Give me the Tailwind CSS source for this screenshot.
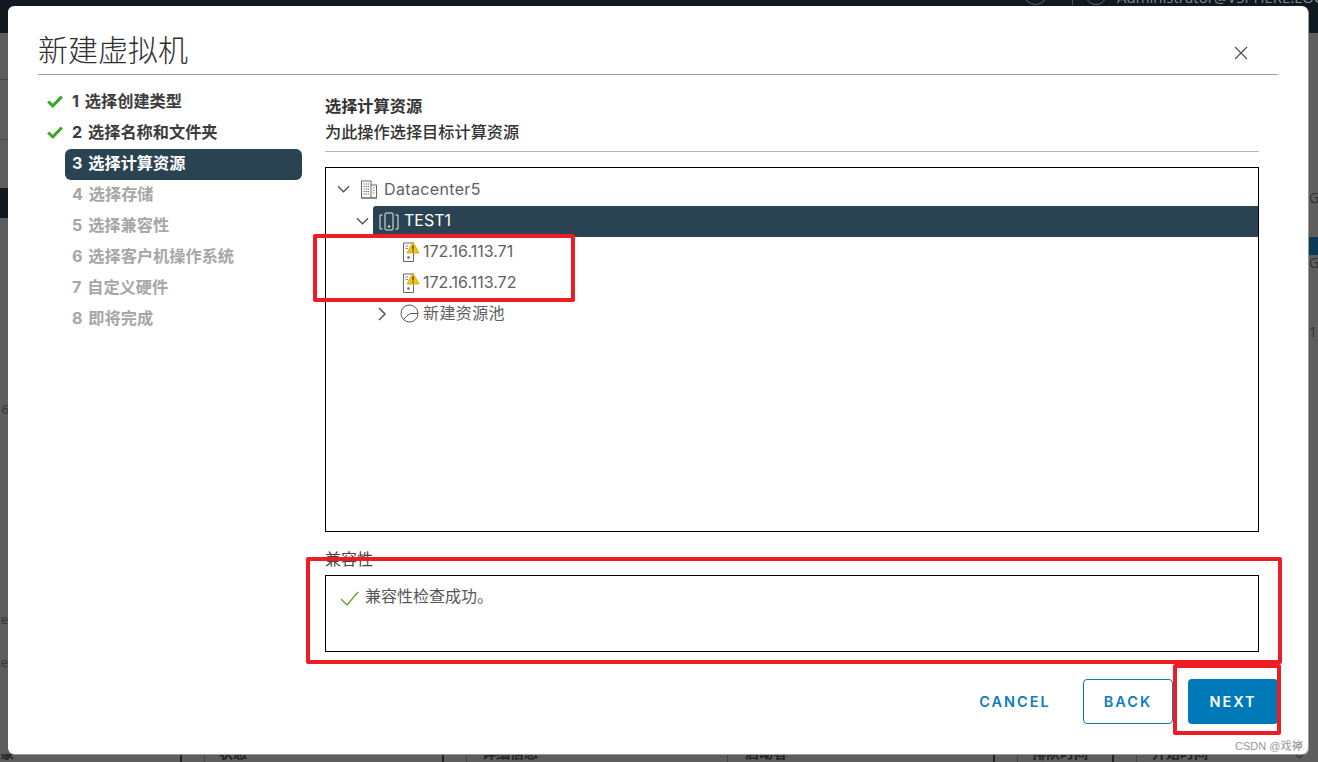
<!DOCTYPE html>
<html lang="en">
<head>
  <meta charset="UTF-8" />
  <title>新建虚拟机</title>
  <script src="https://cdn.jsdelivr.net/npm/@tailwindcss/browser@4"></script>
</head>
<body class="relative w-[1318px] h-[762px] overflow-hidden bg-[#5e5e5e] font-['Open_Sans','Noto_Sans_CJK_SC',sans-serif]">

  <!-- dimmed page behind the dialog -->
  <div class="flex flex-col h-full">
    <div class="h-[53px] -mt-[20px] bg-[#10191f] shrink-0 flex items-start pl-[1023px] text-[#7f8a92] text-[15px] leading-none">
      <span class="w-[25px] h-[25px] shrink-0 rounded-full border border-[#5b656c]"></span>
      <span class="w-px h-[25px] shrink-0 ml-[24px] bg-[#444e55]"></span>
      <span class="w-[22px] h-[25px] shrink-0 ml-[12px] rounded-full border border-[#5b656c]"></span>
      <span class="mt-[10px] ml-[10px] whitespace-nowrap">Administrator@VSPHERE.LOCAL</span>
    </div>
    <div class="flex justify-between grow text-[#333] text-[13px]">
      <div class="w-2 flex flex-col overflow-hidden">
        <div class="h-[47px] shrink-0 border-b border-[#4a4a4a]"></div>
        <div class="h-[60px] shrink-0 border-b border-[#4a4a4a]"></div>
        <div class="h-[48px] shrink-0"></div>
        <div class="h-[30px] shrink-0 bg-[#10191f]"></div>
        <div class="h-[198px] shrink-0 flex items-end justify-end"><span class="leading-none -mr-[1px]">6</span></div>
        <div class="h-[210px] shrink-0 flex items-end justify-end"><span class="leading-none whitespace-nowrap">ce</span></div>
        <div class="h-[43px] shrink-0 flex items-end justify-end"><span class="leading-none whitespace-nowrap">ce</span></div>
      </div>
      <div class="w-[10px] flex flex-col overflow-hidden text-[14px]">
        <div class="h-[172px] shrink-0 flex items-end pl-[1px]"><span class="leading-none whitespace-nowrap">GH</span></div>
        <div class="h-[32px] shrink-0"></div>
        <div class="h-[18px] shrink-0 bg-[#0a3a57]"></div>
        <div class="h-[15px] shrink-0 flex items-end pl-[1px]"><span class="leading-none">G</span></div>
        <div class="h-[69px] shrink-0 flex items-end pl-[1px]"><span class="leading-none whitespace-nowrap">1 (</span></div>
      </div>
    </div>
  </div>
  <div class="absolute left-0 right-0 top-[754px] h-2 overflow-hidden text-[#222] text-[14px] font-semibold leading-none">
    <span class="absolute left-0 -top-[8px]">象</span>
    <span class="absolute left-[180px] top-0 w-[2px] h-2 bg-[#222]"></span>
    <span class="absolute left-[204px] top-0 w-px h-2 bg-[#444]"></span>
    <span class="absolute left-[219px] -top-[8px]">状态</span>
    <span class="absolute left-[442px] top-0 w-[2px] h-2 bg-[#222]"></span>
    <span class="absolute left-[466px] top-0 w-px h-2 bg-[#444]"></span>
    <span class="absolute left-[482px] -top-[8px]">详细信息</span>
    <span class="absolute left-[727px] top-0 w-px h-2 bg-[#444]"></span>
    <span class="absolute left-[745px] -top-[8px]">启动者</span>
    <span class="absolute left-[993px] top-0 w-[2px] h-2 bg-[#222]"></span>
    <span class="absolute left-[1017px] top-0 w-px h-2 bg-[#444]"></span>
    <span class="absolute left-[1032px] -top-[8px]">排队时间</span>
    <span class="absolute left-[1112px] top-0 w-[2px] h-2 bg-[#222]"></span>
    <span class="absolute left-[1136px] top-0 w-px h-2 bg-[#444]"></span>
    <span class="absolute left-[1152px] -top-[8px]">开始时间</span>
    <svg class="absolute left-[1295px] top-0" width="9" height="5" viewBox="0 0 9 5" fill="none" stroke="#222"><path d="M.5 .5l4 3.500 4-3.500"/></svg>
  </div>

  <!-- dialog -->
  <div class="absolute left-2 top-[6px] w-[1300px] h-[748px] bg-white rounded-md shadow-[1px_1px_0_#9a9a9a] flex flex-col pl-[30px] pr-[30px]">
    <div class="h-[69px] shrink-0 flex items-end justify-between border-b border-[#a3a3a3] pb-[4px]">
      <h1 class="text-[30px] leading-[44px] font-light text-[#2f2f2f] font-['Noto_Sans_CJK_SC',sans-serif]">新建虚拟机</h1>
      <svg class="mb-[10px] mr-[30px]" width="14" height="14" viewBox="0 0 14 14" fill="none" stroke="#4a4a4a" stroke-width="1.1"><path d="M1 1l12 12M13 1L1 13"/></svg>
    </div>

    <div class="flex grow min-h-0">
      <!-- steps -->
      <ol class="w-[264px] shrink-0 pt-[11px] text-[16.2px] font-bold leading-[31px] text-[#a6a6a6] pl-[27px] [word-spacing:2px] font-['Inter','Noto_Sans_CJK_SC',sans-serif]">
        <li class="h-[31px] relative pl-[7px] text-[#3c3c3c]">
          <svg class="absolute -left-[18px] top-[9px]" width="16" height="13" viewBox="0 0 16 13" fill="none" stroke="#3aa52a" stroke-width="3"><path d="M1.2 6.500l4.600 4.300L14.800 1.600"/></svg>
          1 选择创建类型
        </li>
        <li class="h-[32px] relative pl-[7px] text-[#3c3c3c]">
          <svg class="absolute -left-[18px] top-[9px]" width="16" height="13" viewBox="0 0 16 13" fill="none" stroke="#3aa52a" stroke-width="3"><path d="M1.2 6.500l4.600 4.300L14.800 1.600"/></svg>
          2 选择名称和文件夹
        </li>
        <li class="h-[31px] leading-[29px] pl-[7px] bg-[#2a4352] text-white rounded-md">3 选择计算资源</li>
        <li class="h-[30px] leading-[29px] pl-[7px]">4 选择存储</li>
        <li class="h-[31px] pl-[7px]">5 选择兼容性</li>
        <li class="h-[31px] pl-[7px]">6 选择客户机操作系统</li>
        <li class="h-[31px] pl-[7px]">7 自定义硬件</li>
        <li class="h-[31px] pl-[7px]">8 即将完成</li>
      </ol>

      <!-- content -->
      <div class="grow min-w-0 pr-[19px] pl-[23px] flex flex-col">
        <div class="pt-[18px] h-[77px] shrink-0 border-b border-[#b5b5b5] text-[16.2px] leading-[26px] text-[#333]">
          <div class="font-bold">选择计算资源</div>
          <div class="font-medium">为此操作选择目标计算资源</div>
        </div>

        <div class="mt-[15px] h-[365px] shrink-0 border border-black pt-[6px] text-[16px] text-[#5f5f5f] font-['Inter','Noto_Sans_CJK_SC',sans-serif]">
          <div class="h-[32px] pb-[1px] flex items-center pl-[11px]">
            <svg width="13" height="9" viewBox="0 0 14 9" fill="none" stroke="#555" stroke-width="1.500"><path d="M1 1l6 6 6-6"/></svg>
            <svg class="ml-[10px]" width="18" height="19" viewBox="0 0 18 19" fill="none" stroke="#666" stroke-width="1"><path d="M1.500 18V1h9.500v17zM11 5h5.500v13H11M1 18h16"/><path d="M3.500 4h5.500M3.500 6.500h5.500M3.500 9h5.500M3.500 11.500h5.500M3.500 14h5.500M13 8h2M13 10.500h2M13 13h2" stroke-dasharray="1.300 .8" /></svg>
            <span class="ml-[6px] pb-[2px] tracking-[0.35px]">Datacenter5</span>
          </div>
          <div class="h-[31px] flex items-center pl-[30px]">
            <svg class="shrink-0" width="13" height="9" viewBox="0 0 14 9" fill="none" stroke="#555" stroke-width="1.500"><path d="M1 1l6 6 6-6"/></svg>
            <div class="ml-[4px] grow h-full pb-[1px] flex items-center bg-[#2a4352] text-white pl-[6px] rounded-l-[3px]">
              <svg width="20" height="19" viewBox="0 0 20 19" fill="none" stroke="#e8edf0" stroke-width="1"><path d="M3.500 3H1v14h2.500M16.500 3H19v14h-2.500"/><rect x="6" y="1" width="8" height="17" rx="1"/><circle cx="10" cy="14.500" r=".8" fill="#e8edf0"/></svg>
              <span class="ml-[5px] pb-[2px]">TEST1</span>
            </div>
          </div>
          <div class="h-[31px] -mt-[1px] flex items-center pl-[76px]">
            <svg width="18" height="22" viewBox="0 0 18 22" fill="none"><path d="M1.500 2h10v18.500h-10z" stroke="#666"/><path d="M3.500 5h2.500M3.500 7.500h2.500" stroke="#888"/><circle cx="6.500" cy="16.500" r="1.300" fill="#666"/><path d="M11 1l6 11H5z" fill="#f5c518" stroke="#c99a00" stroke-width=".7" stroke-linejoin="round"/><path d="M11 4.500v4M11 9.500v1.300" stroke="#333" stroke-width="1.300"/></svg>
            <span class="ml-[3px] pb-[2px]">172.16.113.71</span>
          </div>
          <div class="h-[31px] flex items-center pl-[76px]">
            <svg width="18" height="22" viewBox="0 0 18 22" fill="none"><path d="M1.500 2h10v18.500h-10z" stroke="#666"/><path d="M3.500 5h2.500M3.500 7.500h2.500" stroke="#888"/><circle cx="6.500" cy="16.500" r="1.300" fill="#666"/><path d="M11 1l6 11H5z" fill="#f5c518" stroke="#c99a00" stroke-width=".7" stroke-linejoin="round"/><path d="M11 4.500v4M11 9.500v1.300" stroke="#333" stroke-width="1.300"/></svg>
            <span class="ml-[3px] pb-[2px]">172.16.113.72</span>
          </div>
          <div class="h-[31px] flex items-center pl-[52px]">
            <svg width="9" height="14" viewBox="0 0 9 14" fill="none" stroke="#555" stroke-width="1.500"><path d="M1 1l6 6-6 6"/></svg>
            <svg class="ml-[13px]" width="19" height="19" viewBox="0 0 19 19" fill="none" stroke="#555" stroke-width="1"><circle cx="9.500" cy="9.500" r="8.500"/><path d="M3.500 15.500L8 11C9.500 9.700 10.500 9.500 12 9.500H18"/></svg>
            <span class="ml-[4px] pb-[4px] tracking-[0.4px] font-['Noto_Sans_CJK_SC',sans-serif]">新建资源池</span>
          </div>
        </div>

        <div class="mt-[14px] text-[16px] leading-[26px] h-[29px] text-[#444] shrink-0">兼容性</div>
        <div class="h-[77px] shrink-0 border border-black flex items-start pl-[14px] pt-[9px] text-[16px] leading-[22px] text-[#565656]">
          <svg class="mt-[6px] shrink-0" width="19" height="15" viewBox="0 0 19 15" fill="none" stroke="#5aa220" stroke-width="1.200"><path d="M1 8l6 6L18 1"/></svg>
          <span class="ml-[6px]">兼容性检查成功。</span>
        </div>
      </div>
    </div>

    <!-- footer buttons -->
    <div class="h-[75px] shrink-0 flex justify-end items-start gap-[15px] text-[14.5px] font-semibold tracking-[2px] text-[#0f7dba] font-['Inter',sans-serif]">
      <button class="h-[45px] w-[72px] mr-[17px]">CANCEL</button>
      <button class="h-[45px] w-[90px] rounded-[4px] border border-[#0f79b5]">BACK</button>
      <button class="h-[45px] w-[90px] rounded-[4px] bg-[#0079b8] text-white">NEXT</button>
    </div>
  </div>

  <!-- annotations -->
  <div class="absolute left-[313px] top-[234px] w-[262px] h-[68px] border-[4px] border-[#ee1c25] rounded-[2px]"></div>
  <div class="absolute left-[306px] top-[557px] w-[976px] h-[107px] border-[4px] border-[#ee1c25] rounded-[2px]"></div>
  <div class="absolute left-[1173px] top-[664px] w-[108px] h-[71px] border-[4px] border-[#ee1c25] rounded-[2px]"></div>

  <svg class="absolute left-[1293px] top-[740px]" width="10" height="10" viewBox="0 0 10 10" fill="none" stroke="#888"><path d="M1 9.500l8.500-8.500M5 9.500l4.500-4.500"/></svg>
  <div class="absolute left-[1235px] top-[739px] text-[11px] leading-[15px] text-[#999] font-['Liberation_Sans','Noto_Sans_CJK_SC',sans-serif]">CSDN @戏神</div>
</body>
</html>
